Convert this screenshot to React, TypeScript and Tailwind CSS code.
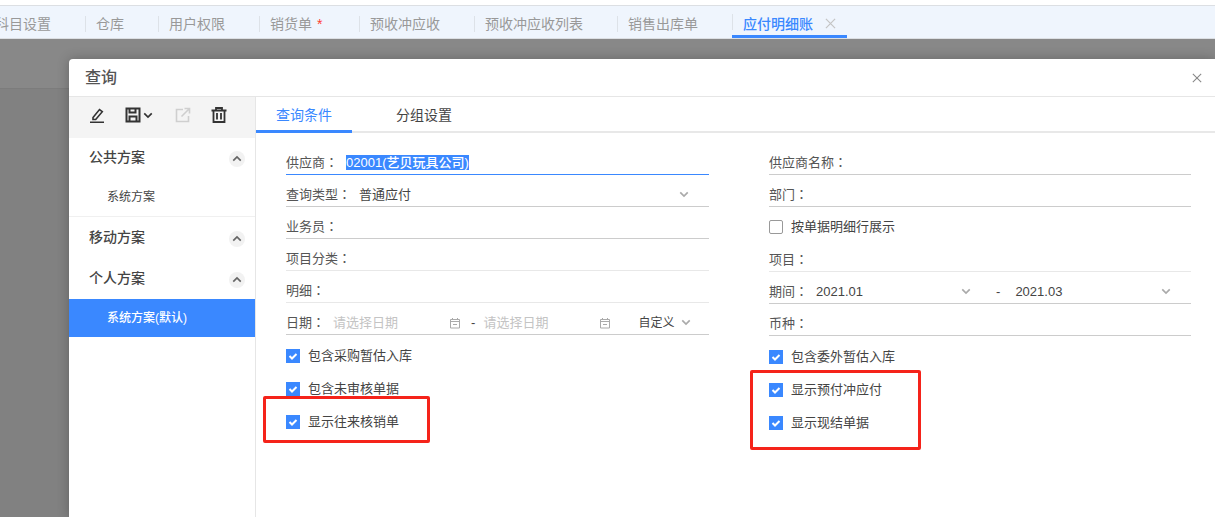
const tabs = [
  { label: "科目设置" },
  { label: "仓库" },
  { label: "用户权限" },
  { label: "销货单", star: true },
  { label: "预收冲应收" },
  { label: "预收冲应收列表" },
  { label: "销售出库单" },
];

function Chevron({ className = "", up = false }: { className?: string; up?: boolean }) {
  return (
    <svg viewBox="0 0 12 8" className={`h-[7px] w-[10px] ${className}`} fill="none" stroke="currentColor" strokeWidth="2">
      <path d={up ? "M1.5 6.5 6 2l4.5 4.5" : "M1.5 1.5 6 6l4.5-4.5"} />
    </svg>
  );
}

function Calendar({ className = "" }: { className?: string }) {
  return (
    <svg viewBox="0 0 12 12" className={`h-[12px] w-[12px] text-[#aaaaaa] ${className}`} fill="none" stroke="currentColor" strokeWidth="1">
      <path d="M1.5 2.5h9v8.5h-9zM1.5 4.5h9M3.5 1v2M8.5 1v2M4 7.5h4" />
    </svg>
  );
}

function Field({ label, children, line = "border-[#cccccc]" }: { label: string; children?: React.ReactNode; line?: string }) {
  return (
    <div className={`flex h-8 items-center border-b pt-2 ${line} text-[13px] text-[#555555]`}>
      <span className="shrink-0">
        {label}
        <span className="font-['Noto_Sans_CJK_TC']">：</span>
      </span>
      {children}
    </div>
  );
}

function Check({ label, checked = true }: { label: string; checked?: boolean }) {
  return (
    <div className="flex h-[33px] items-center gap-2 text-[13px] text-[#444444]">
      {checked ? (
        <span className="flex h-[14px] w-[14px] items-center justify-center bg-[#3a88ff]">
          <svg viewBox="0 0 14 14" className="h-[14px] w-[14px]" fill="none" stroke="white" strokeWidth="2">
            <path d="M3.5 7 6 9.5l4.5-4.5" />
          </svg>
        </span>
      ) : (
        <span className="h-[14px] w-[14px] rounded-[2px] border border-[#999999] bg-white" />
      )}
      <span>{label}</span>
    </div>
  );
}

function PlanHead({ label, className = "" }: { label: string; className?: string }) {
  return (
    <div className={`flex items-center justify-between pb-[2px] pl-5 pr-[10px] text-sm font-medium text-[#444444] ${className}`}>
      <span>{label}</span>
      <span className="mt-[4px] flex h-4 w-4 items-center justify-center rounded-full bg-[#f2f2f2] text-[#666666]">
        <Chevron up className="h-[5px] w-[7px]" />
      </span>
    </div>
  );
}

export default function App() {
  return (
    <div
      className="relative flex h-[517px] w-[1215px] flex-col overflow-hidden bg-[#818181]"
      style={{ fontFamily: '"Liberation Sans", "Noto Sans CJK SC", sans-serif' }}
    >
      {/* 顶部标签 */}
      <div className="h-[5px] bg-white" />
      <div className="flex h-[34px] items-center border-y border-[#dcdfe3] bg-[#eff5fd] text-sm text-[#999999]">
        <div className="-ml-[15px] flex h-full">
          {tabs.map((t, i) => (
            <div key={t.label} className="flex items-center">
              {i > 0 && <span className="mt-[3px] h-4 w-px bg-[#dde2e8]" />}
              <span className="whitespace-nowrap pl-[10px] pr-[34px] pt-[3px]">
                {t.label}
                {t.star && <span className="ml-[5px] inline-block w-[8px] text-sm text-[#ff3b30]">*</span>}
              </span>
            </div>
          ))}
          <span className="mt-[8px] h-4 w-px bg-[#dde2e8]" />
          <div className="-ml-px flex w-[115px] items-center gap-3 border-b-[3px] border-[#3a88ff] pl-[11px] pt-[6px] font-medium text-[#3a88ff]">
            <span className="whitespace-nowrap">应付明细账</span>
            <svg viewBox="0 0 12 12" className="h-[11px] w-[11px] text-[#c4c4c4]" fill="none" stroke="currentColor" strokeWidth="1.3">
              <path d="m1 1 10 10M11 1 1 11" />
            </svg>
          </div>
        </div>
      </div>
      <div className="h-[50px] border-b border-[#7c7c7c] bg-[#888888]" />

      {/* 查询弹窗 */}
      <div className="absolute bottom-0 left-[69px] right-0 top-[59px] flex flex-col rounded-tl bg-white shadow-[0_0_12px_rgba(0,0,0,0.25)]">
        <div className="flex h-[38px] shrink-0 items-center justify-between border-b border-[#e6e6e6] pl-4 pr-[13px]">
          <span className="text-base font-medium text-[#555555]">查询</span>
          <svg viewBox="0 0 12 12" className="h-[10px] w-[10px] text-[#888888]" fill="none" stroke="currentColor" strokeWidth="1.3">
            <path d="m1 1 10 10M11 1 1 11" />
          </svg>
        </div>

        <div className="flex flex-1">
          {/* 方案列表 */}
          <div className="w-[187px] shrink-0 border-r border-[#e6e6e6]">
            <div className="flex h-[41px] items-center bg-[#f4f4f4] pb-[5px] pl-[20px] text-[#333333]">
              <svg viewBox="0 0 16 16" className="h-4 w-4" fill="none" stroke="currentColor" strokeWidth="1.6">
                <path d="M4 10.5 10.5 2.5l2.8 2.2-6.6 7.8H4zM1 15.2h14" />
              </svg>
              <svg viewBox="0 0 16 16" className="ml-[20px] h-4 w-4" fill="none" stroke="currentColor" strokeWidth="2">
                <path d="M1.5 1.5h13v13h-13zM4.5 1.5v4h6v-4M4.5 14.5v-5h7v5" />
              </svg>
              <Chevron className="ml-[2px]" />
              <svg viewBox="0 0 16 16" className="ml-[22px] h-4 w-4 text-[#cfcfcf]" fill="none" stroke="currentColor" strokeWidth="1.6">
                <path d="M8 2.5H1.5v12h12V9M9.5 1.5h5v5M14.5 1.5l-8 8" />
              </svg>
              <svg viewBox="0 0 16 16" className="ml-[20px] h-4 w-4" fill="none" stroke="currentColor" strokeWidth="1.8">
                <path d="M.5 3.5h15M5 3.5V1h6v2.5M2.5 3.5V15h11V3.5M6 6v6.5M10 6v6.5" />
              </svg>
            </div>
            <PlanHead label="公共方案" className="h-[39px]" />
            <div className="flex h-[40px] items-center border-b border-[#f0f0f0] pl-[38px] text-xs text-[#444444]">系统方案</div>
            <PlanHead label="移动方案" className="h-[41px]" />
            <PlanHead label="个人方案" className="h-[41px]" />
            <div className="flex h-[38px] items-center bg-[#3a88ff] pl-[38px] text-xs font-medium text-white">系统方案(默认)</div>
          </div>

          {/* 查询条件 */}
          <div className="flex-1">
            <div className="flex h-[36px] border-b-2 border-[#e8e8e8] text-sm">
              <div className="-mb-[2px] flex w-[96px] items-center justify-center border-b-[3px] border-[#3a88ff] pt-[2px] text-[#3a88ff]">查询条件</div>
              <div className="flex w-[144px] items-center justify-center pt-[2px] text-[#444444]">分组设置</div>
            </div>

            <div className="grid w-[935px] grid-cols-[423px_422px] gap-x-[60px] pl-[30px] pt-[10px]">
              <div>
                <Field label="供应商" line="border-[#3a88ff]">
                  <span className="ml-[8px] bg-[#3a88ff] font-medium leading-[15px] text-white">02001(艺贝玩具公司)</span>
                </Field>
                <Field label="查询类型">
                  <span className="ml-[8px] text-[#444444]">普通应付</span>
                  <Chevron className="ml-auto mr-[20px] text-[#aaaaaa]" />
                </Field>
                <Field label="业务员" />
                <Field label="项目分类" line="border-[#e8e8e8]" />
                <Field label="明细" line="border-[#e8e8e8]" />
                <Field label="日期">
                  <div className="ml-[8px] flex w-[127px] shrink-0 items-center text-[#c4c4c4]">
                    <span>请选择日期</span>
                    <Calendar className="ml-auto mr-[-1px]" />
                  </div>
                  <span className="ml-[11px] text-[#444444]">-</span>
                  <div className="ml-[8px] flex w-[128px] shrink-0 items-center text-[#c4c4c4]">
                    <span>请选择日期</span>
                    <Calendar className="ml-auto" />
                  </div>
                  <span className="ml-[27px] text-xs text-[#444444]">自定义</span>
                  <Chevron className="ml-[7px] text-[#aaaaaa]" />
                </Field>
                <div className="pt-[4px]">
                  <Check label="包含采购暂估入库" />
                  <Check label="包含未审核单据" />
                  <Check label="显示往来核销单" />
                </div>
              </div>

              <div>
                <Field label="供应商名称" />
                <Field label="部门" />
                <div className="flex h-[33px] items-center pt-[7px]">
                  <Check label="按单据明细行展示" checked={false} />
                </div>
                <Field label="项目" line="border-[#e8e8e8]" />
                <Field label="期间">
                  <span className="ml-[8px] w-[145px] shrink-0 text-[#444444]">2021.01</span>
                  <Chevron className="text-[#aaaaaa]" />
                  <span className="ml-[25px] text-[#444444]">-</span>
                  <span className="ml-[15px] w-[146px] shrink-0 text-[#444444]">2021.03</span>
                  <Chevron className="text-[#aaaaaa]" />
                </Field>
                <Field label="币种" />
                <div className="pt-[4px]">
                  <Check label="包含委外暂估入库" />
                  <Check label="显示预付冲应付" />
                  <Check label="显示现结单据" />
                </div>
              </div>
            </div>
          </div>
        </div>
      </div>

      {/* 红框标注 */}
      <div className="absolute left-[263px] top-[396px] h-[47px] w-[167px] rounded-[2px] border-[3px] border-[#f5231a]" />
      <div className="absolute left-[750px] top-[370px] h-[80px] w-[171px] rounded-[2px] border-[3px] border-[#f5231a]" />
    </div>
  );
}
